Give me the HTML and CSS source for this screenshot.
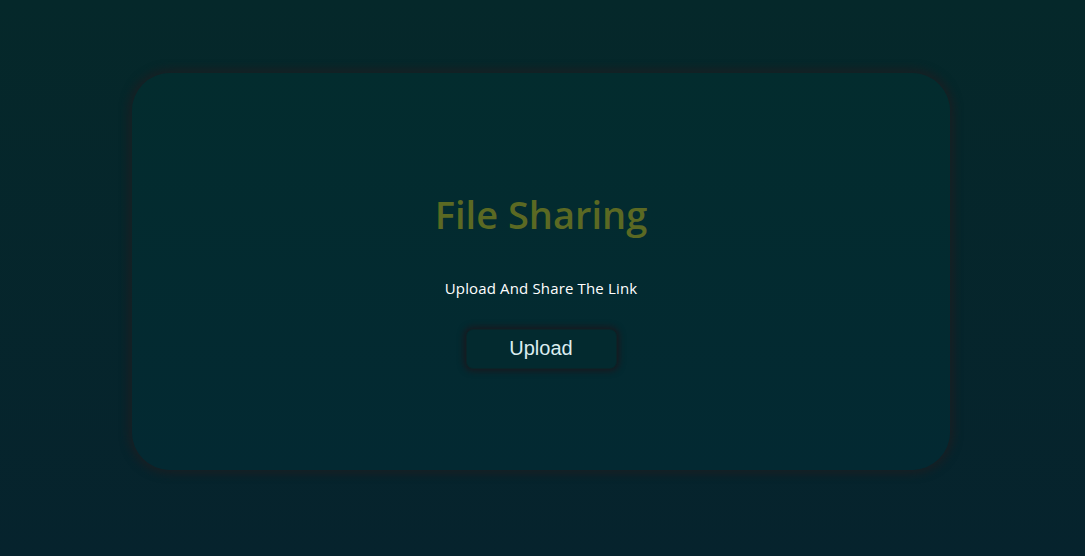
FILE: index.html
```html
<!DOCTYPE html>
<html lang="en">
<head>
<meta charset="utf-8">
<title>File Sharing</title>
<link rel="stylesheet" href="styles.css">
</head>
<body>
<main class="page">
  <section class="card">
    <h1 class="title">File Sharing</h1>
    <p class="subtitle">Upload And Share The Link</p>
    <button class="upload-btn" type="button">Upload</button>
  </section>
</main>
</body>
</html>
```
FILE: styles.css
```css
* { box-sizing: border-box; }
html, body { margin: 0; height: 100%; }
body {
  background: linear-gradient(180deg, #05282a 0%, #06232d 100%);
  font-family: "Open Sans", "Noto Sans", sans-serif;
}
.page {
  height: 556px;
  padding: 73px 135px 0 132px;
}
.card {
  height: 397px;
  border-radius: 38px;
  background: linear-gradient(180deg, #032c2e 0%, #032932 100%);
  box-shadow: 0 0 9px 4px rgba(28, 30, 34, 0.8);
  display: flex;
  flex-direction: column;
  align-items: center;
  padding-top: 117px;
}
.title {
  margin: 0;
  font-size: 38px;
  font-weight: 600;
  line-height: 48px;
  color: #5b6923;
}
.subtitle {
  margin: 40px 0 0;
  font-size: 15px;
  letter-spacing: 0.15px;
  line-height: 20px;
  color: #ffffff;
}
.upload-btn {
  margin-top: 31px;
  width: 151px;
  height: 40px;
  padding: 0 0 2px;
  border: 1px solid #0a2428;
  border-radius: 7px;
  background: #032a2f;
  box-shadow: 0 0 6px 2px rgba(30, 20, 26, 0.85);
  color: #dcedf0;
  font-family: "Liberation Sans", Arial, sans-serif;
  font-size: 20px;
  line-height: 1;
  cursor: pointer;
}
```
